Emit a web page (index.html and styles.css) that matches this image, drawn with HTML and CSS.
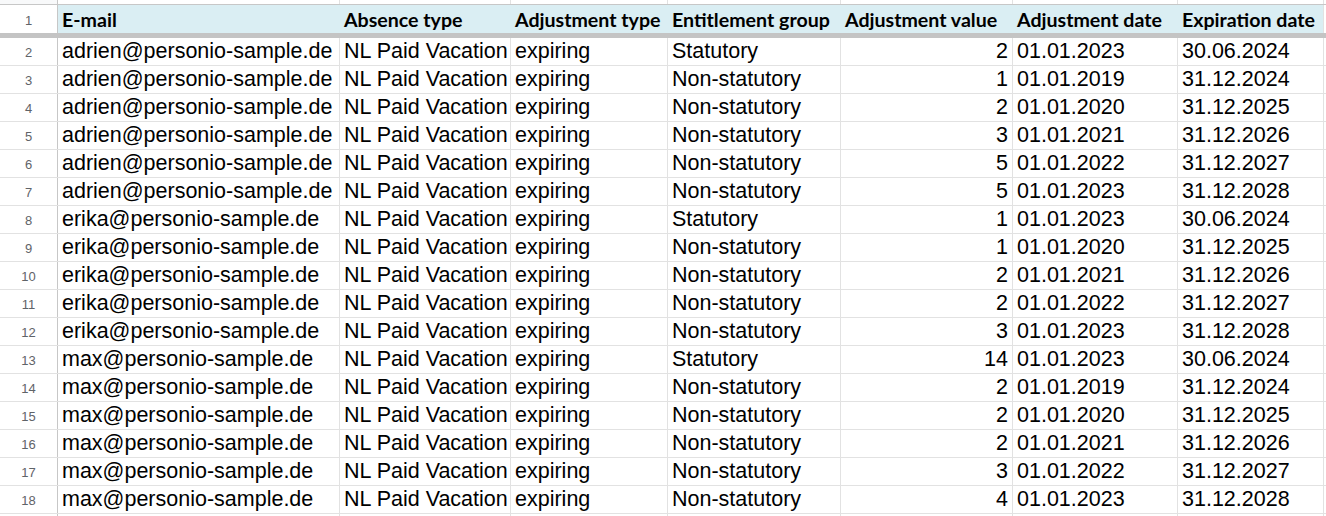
FILE: index.html
```html
<!DOCTYPE html>
<html>
<head>
<meta charset="utf-8">
<link rel="stylesheet" href="styles.css">
</head>
<body>
<div class="sheet">
  <div class="row colhead">
    <div class="rn"></div><div class="c a"></div><div class="c b"></div><div class="c cc"></div><div class="c d"></div><div class="c e"></div><div class="c f"></div><div class="c g"></div><div class="c h"></div>
  </div>
  <div class="row head">
    <div class="rn">1</div>
    <div class="c a">E-mail</div>
    <div class="c b">Absence type</div>
    <div class="c cc">Adjustment type</div>
    <div class="c d">Entitlement group</div>
    <div class="c e">Adjustment value</div>
    <div class="c f">Adjustment date</div>
    <div class="c g">Expiration date</div>
    <div class="c h"></div>
  </div>
  <div class="freeze"></div>
  <div id="body"></div>
</div>
<script src="app.js"></script>
</body>
</html>
```

FILE: app.js
```js
const rows = [
  ["adrien","Statutory",2,"01.01.2023","30.06.2024"],
  ["adrien","Non-statutory",1,"01.01.2019","31.12.2024"],
  ["adrien","Non-statutory",2,"01.01.2020","31.12.2025"],
  ["adrien","Non-statutory",3,"01.01.2021","31.12.2026"],
  ["adrien","Non-statutory",5,"01.01.2022","31.12.2027"],
  ["adrien","Non-statutory",5,"01.01.2023","31.12.2028"],
  ["erika","Statutory",1,"01.01.2023","30.06.2024"],
  ["erika","Non-statutory",1,"01.01.2020","31.12.2025"],
  ["erika","Non-statutory",2,"01.01.2021","31.12.2026"],
  ["erika","Non-statutory",2,"01.01.2022","31.12.2027"],
  ["erika","Non-statutory",3,"01.01.2023","31.12.2028"],
  ["max","Statutory",14,"01.01.2023","30.06.2024"],
  ["max","Non-statutory",2,"01.01.2019","31.12.2024"],
  ["max","Non-statutory",2,"01.01.2020","31.12.2025"],
  ["max","Non-statutory",2,"01.01.2021","31.12.2026"],
  ["max","Non-statutory",3,"01.01.2022","31.12.2027"],
  ["max","Non-statutory",4,"01.01.2023","31.12.2028"]
];
const body = document.getElementById("body");
let html = "";
rows.forEach((r, i) => {
  html += `<div class="row data">
    <div class="rn">${i + 2}</div>
    <div class="c a">${r[0]}@personio-sample.de</div>
    <div class="c b">NL Paid Vacation</div>
    <div class="c cc">expiring</div>
    <div class="c d">${r[1]}</div>
    <div class="c e num">${r[2]}</div>
    <div class="c f">${r[3]}</div>
    <div class="c g">${r[4]}</div>
    <div class="c h"></div>
  </div>`;
});
html += `<div class="row data"><div class="rn"></div><div class="c a"></div><div class="c b"></div><div class="c cc"></div><div class="c d"></div><div class="c e"></div><div class="c f"></div><div class="c g"></div><div class="c h"></div></div>`;
body.innerHTML = html;
```

FILE: styles.css
```css
html, body {
  margin: 0;
  padding: 0;
  background: #fff;
  overflow: hidden;
}
.sheet {
  width: 1326px;
  height: 516px;
  overflow: hidden;
  font-family: "Liberation Sans", Arial, sans-serif;
  color: #000;
}
.row {
  display: flex;
  flex-wrap: nowrap;
}
.row > div {
  box-sizing: border-box;
  flex: none;
  border-right: 1px solid #e2e2e2;
  white-space: nowrap;
  overflow: hidden;
}
.rn { width: 58px; border-right-color: #c7c7c7 !important; }
.a { width: 282px; }
.b { width: 171px; }
.cc { width: 157px; }
.d { width: 173px; }
.e { width: 172px; }
.f { width: 165px; }
.g { width: 146px; }
.h { width: 60px; }

.colhead { height: 5px; border-bottom: 1px solid #c7c7c7; box-sizing: border-box; }
.colhead .rn { background: #f8f9fa; }

.head { height: 28px; }
.head .c {
  background: #daeef3;
  border-right: none;
  font-family: "Lato", "Open Sans", sans-serif;
  font-weight: 700;
  font-size: 19.6px;
  line-height: 22px;
  padding: 0 4px 2px 4px;
  display: flex;
  align-items: flex-end;
}
.head .c.h { background: #fff; border-left: 1px solid #e2e2e2; }
.head .c.g { width: 145px; }

.freeze { height: 5px; background: #c4c4c4; }

.rn {
  font-family: "Liberation Sans", Arial, sans-serif;
  font-size: 13px;
  color: #5f6368;
  display: flex;
  align-items: center;
  justify-content: center;
  padding-top: 2px;
}
.data { height: 28px; border-bottom: 1px solid #e2e2e2; box-sizing: border-box; }
.data .c {
  font-size: 21.5px;
  line-height: 24px;
  padding: 0 4px 2px 4px;
  display: flex;
  align-items: flex-end;
}
.data .num { justify-content: flex-end; }
```
